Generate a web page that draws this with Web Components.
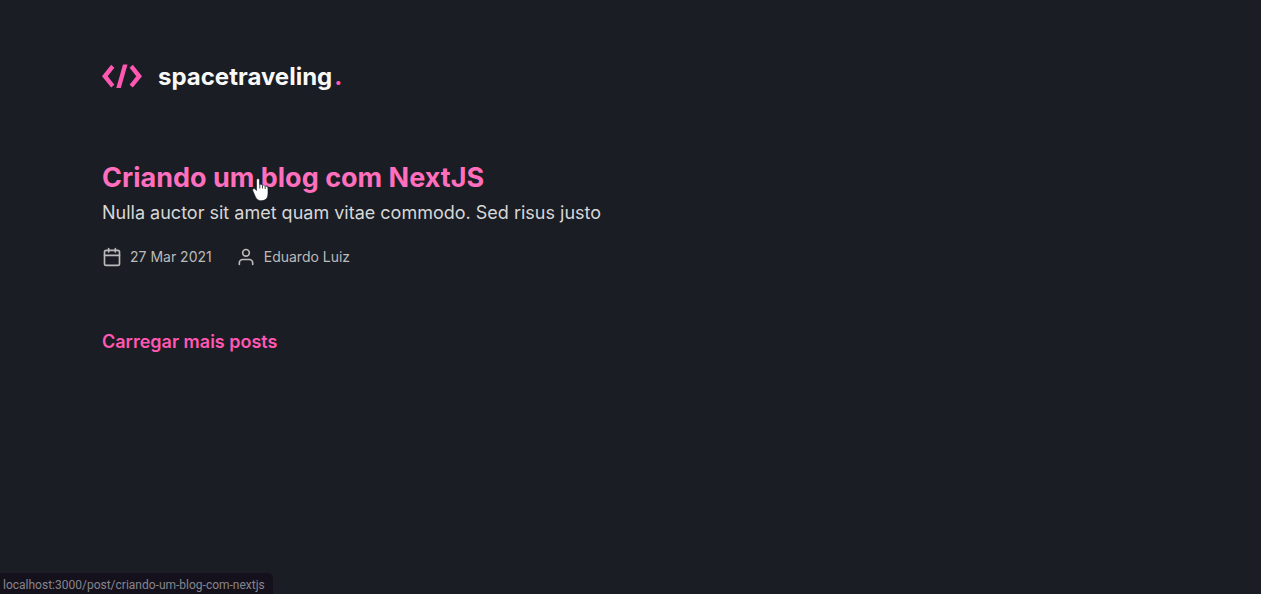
<!DOCTYPE html>
<html lang="pt-BR">
<head>
<meta charset="utf-8">
<meta name="viewport" content="width=device-width, initial-scale=1">
<title>Home | spacetraveling</title>
<style>
  body {
    margin: 0;
    min-height: 100vh;
    background: #1a1d23;
    color: #d7d7d7;
    font-family: Inter, "Liberation Sans", sans-serif;
    --highlight: #ff57b2;
    --highlight-hover: #ff6fbd;
    --heading: #f8f8f8;
    --info: #bbbbbb;
  }
</style>
</head>
<body>
<blog-page>
  <site-header slot="header"></site-header>
  <post-card href="#criando-um-blog-com-nextjs">
    <span slot="title">Criando um blog com NextJS</span>
    <span slot="subtitle">Nulla auctor sit amet quam vitae commodo. Sed risus justo</span>
    <post-info slot="info" icon="calendar">27 Mar 2021</post-info>
    <post-info slot="info" icon="user">Eduardo Luiz</post-info>
  </post-card>
  <load-more>Carregar mais posts</load-more>
</blog-page>
<link-status>localhost:3000/post/criando-um-blog-com-nextjs</link-status>
<hand-pointer></hand-pointer>
<script>
const define = (name, html, setup) => customElements.define(name, class extends HTMLElement {
  constructor() {
    super();
    const template = document.createElement('template');
    template.innerHTML = html;
    this.attachShadow({ mode: 'open' }).append(template.content.cloneNode(true));
  }
  connectedCallback() { if (setup) setup(this); }
});

define('blog-page', `
  <style>
    :host { display: block; box-sizing: border-box; max-width: 1121px; margin: 0 auto; padding: 64px 32px; }
    main { display: flex; flex-direction: column; align-items: flex-start; gap: 60px; margin-top: 66px; }
  </style>
  <slot name="header"></slot>
  <main><slot></slot></main>`);

define('site-header', `
  <style>
    :host { display: block; }
    a { display: flex; width: fit-content; align-items: center; gap: 16px; color: var(--heading); text-decoration: none; font-size: 24px; line-height: 25px; font-weight: 700; }
    svg { width: 40px; height: 25px; }
    .name { display: flex; gap: 2px; }
    .dot { color: var(--highlight); }
  </style>
  <header><a href="#">
    <svg viewBox="0 0 40 25" fill="#ff57b2" aria-hidden="true">
      <path d="M9.200.8 0 12.200l9.200 11.400 3.200-2.900-6.700-8.500 6.700-8.500zM30.800.8 40 12.200l-9.200 11.400-3.200-2.900 6.700-8.500-6.700-8.500zM21 .500h4.500l-6.700 23.500h-4.500z"/>
    </svg>
    <span class="name"><span>spacetraveling</span><span class="dot">.</span></span>
  </a></header>`);

define('post-card', `
  <style>
    :host { display: block; }
    a { display: block; color: inherit; text-decoration: none; }
    h1 { margin: 0; font-size: 27px; line-height: 46px; font-weight: 700; color: var(--highlight-hover); }
    p { margin: 0; font-size: 18px; line-height: 24px; }
    .info { display: flex; gap: 24px; margin-top: 22px; }
  </style>
  <a>
    <h1><slot name="title"></slot></h1>
    <p><slot name="subtitle"></slot></p>
    <div class="info"><slot name="info"></slot></div>
  </a>`, el => { el.shadowRoot.querySelector('a').href = el.getAttribute('href'); });

const icons = {
  calendar: '<rect x="3" y="4" width="18" height="18" rx="2"/><path d="M16 2v4M8 2v4M3 10h18"/>',
  user: '<path d="M20 21v-2a4 4 0 0 0-4-4H8a4 4 0 0 0-4 4v2"/><circle cx="12" cy="7" r="4"/>'
};
define('post-info', `
  <style>
    :host { display: flex; align-items: center; gap: 8px; color: var(--info); font-size: 14px; line-height: 20px; }
    svg { width: 20px; height: 20px; }
  </style>
  <svg viewBox="0 0 24 24" fill="none" stroke="currentColor" stroke-width="2" stroke-linecap="round" stroke-linejoin="round" aria-hidden="true"></svg>
  <span><slot></slot></span>`, el => { el.shadowRoot.querySelector('svg').innerHTML = icons[el.getAttribute('icon')]; });

define('load-more', `
  <style>
    :host { display: block; }
    button { padding: 0; border: 0; background: none; font: inherit; font-size: 18px; line-height: 30px; font-weight: 600; color: var(--highlight); cursor: pointer; }
  </style>
  <button type="button"><slot></slot></button>`);

define('link-status', `
  <style>
    :host { position: fixed; left: 0; bottom: 0; padding: 3px 8px 0 3px; border-radius: 0 5px 0 0; background: #15111c; color: #85858d; font: 12px/18px Roboto, "Noto Sans", sans-serif; white-space: nowrap; }
  </style>
  <slot></slot>`);

define('hand-pointer', `
  <style>
    :host { position: absolute; left: 252px; top: 178px; pointer-events: none; }
    svg { display: block; width: 17px; height: 24px; }
  </style>
  <svg viewBox="0 0 17 24" aria-hidden="true">
    <path d="M4.500 2q0-1.500 1.500-1.500T7.500 2v4.500q1.800-.8 2.700.8 1.800-.7 2.600.9 2.900-.8 3.200 1.800V16q0 6.800-7.200 6.800-3.600 0-5.300-3.800L.8 12.800q-.6-2 1-2.200 1.400-.1 2.700 1.900z" fill="#fff" stroke="#14161b" stroke-width=".6"/>
    <path d="M7.800 6.500v4M10.500 7.500v3M13.200 8.500v2.500" stroke="#14161b" stroke-width=".8"/>
  </svg>`);
</script>
</body>
</html>
